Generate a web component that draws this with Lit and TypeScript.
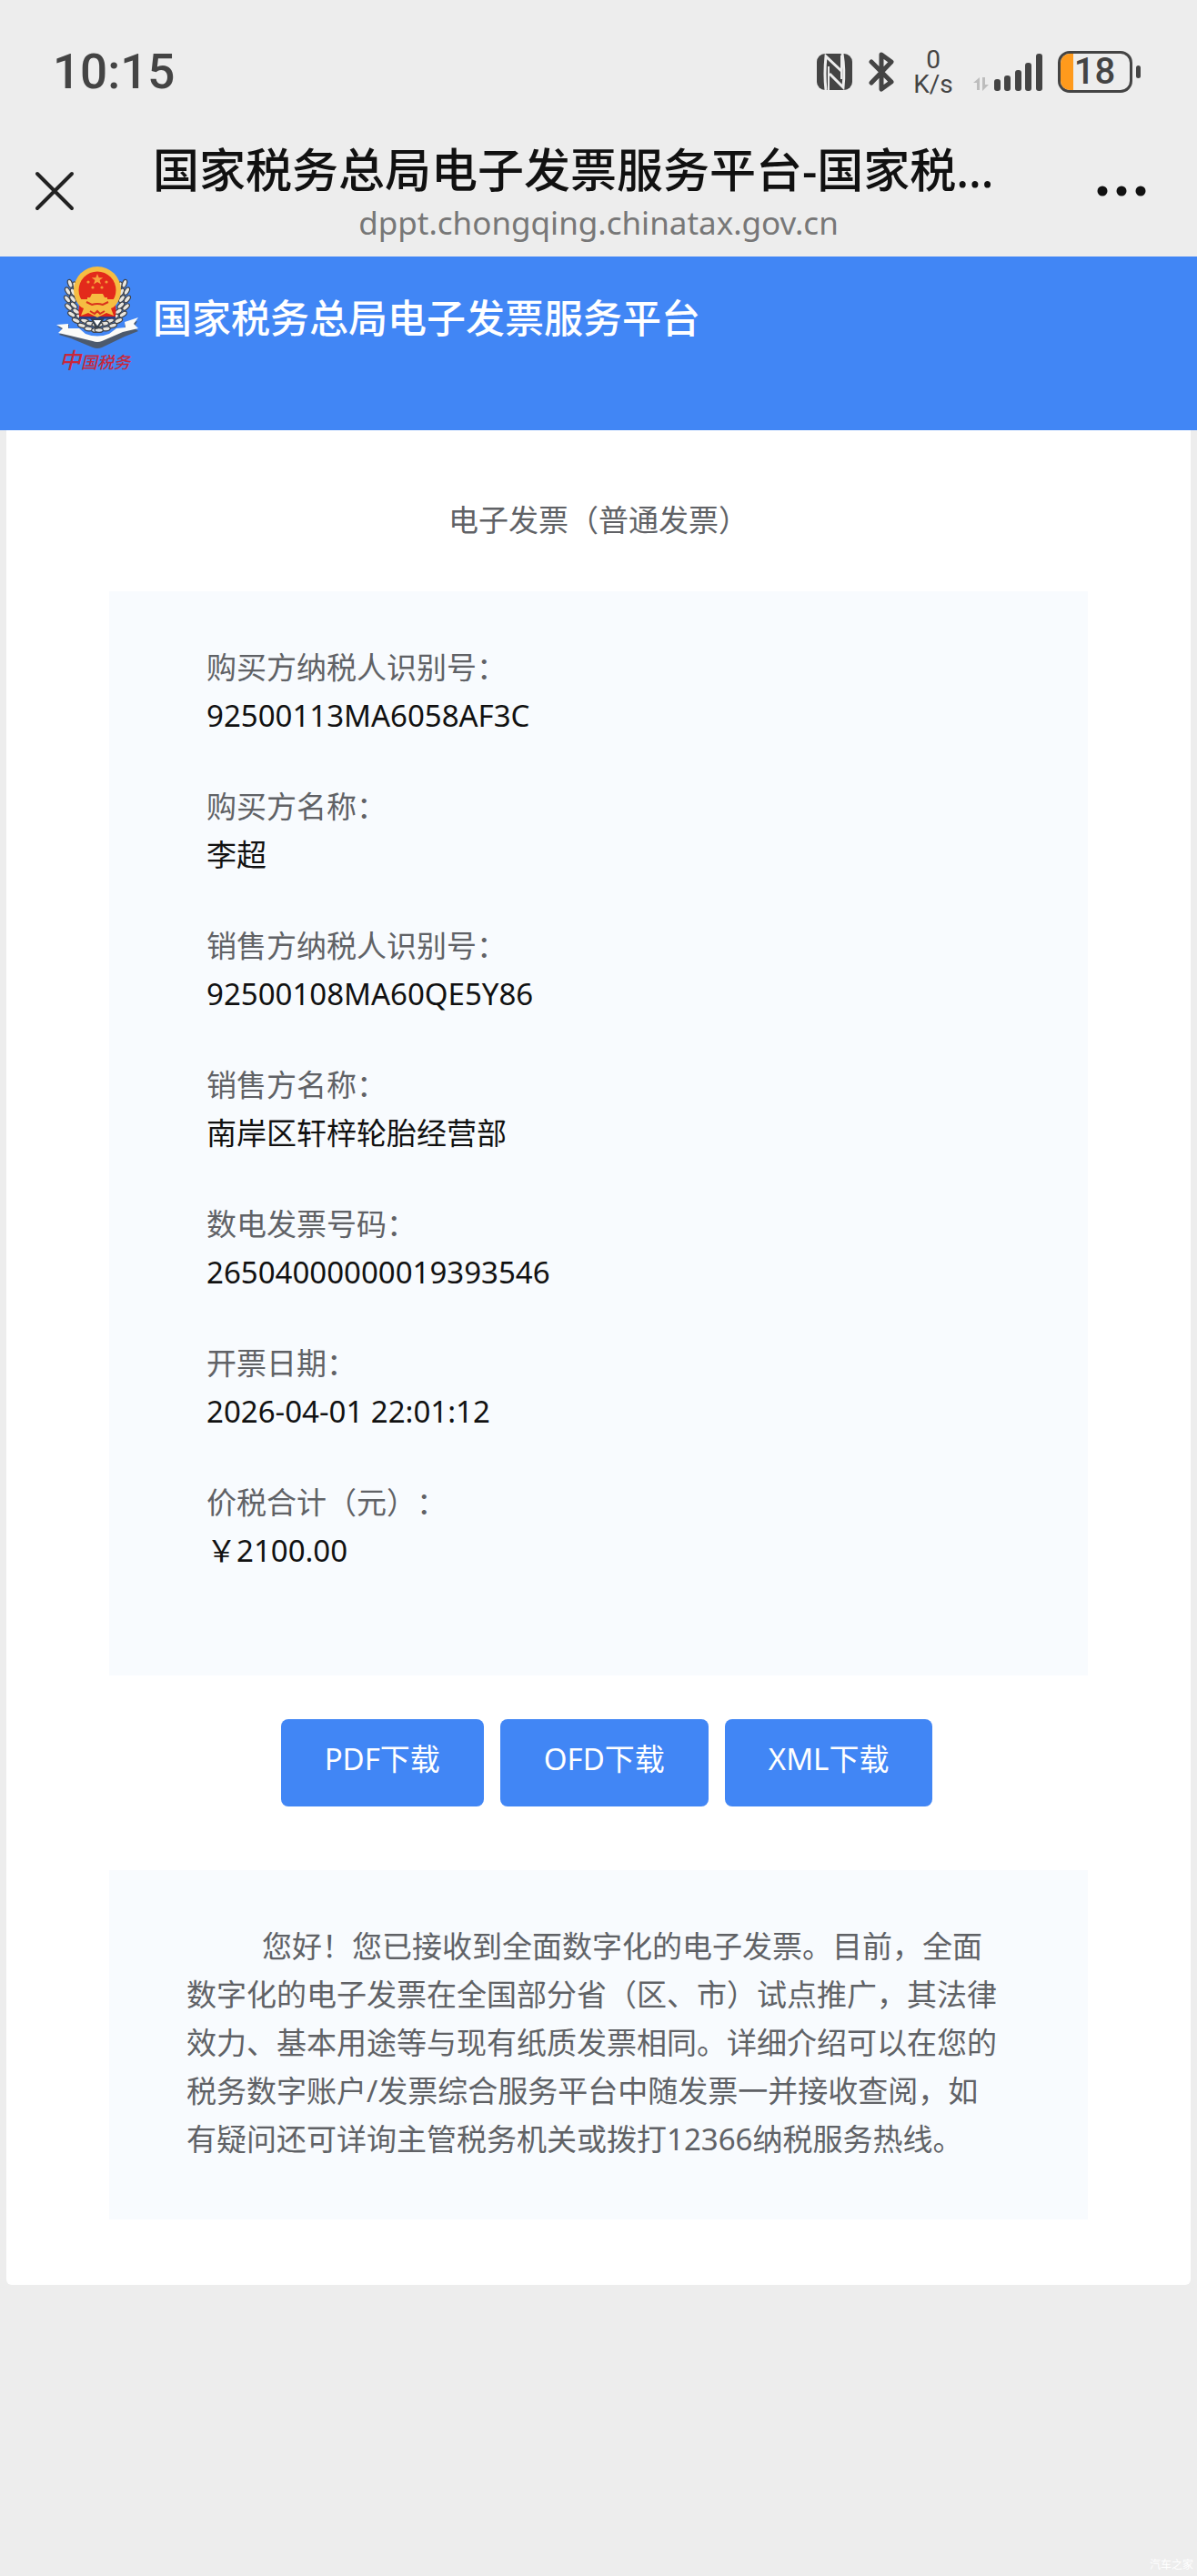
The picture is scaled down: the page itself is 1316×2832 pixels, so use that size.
import { html, svg, css, LitElement } from 'lit';
import { customElement, property } from 'lit/decorators.js';

interface InvoiceField {
  label: string;
  value: string;
}

const FIELDS: InvoiceField[] = [
  { label: '购买方纳税人识别号：', value: '92500113MA6058AF3C' },
  { label: '购买方名称：', value: '李超' },
  { label: '销售方纳税人识别号：', value: '92500108MA60QE5Y86' },
  { label: '销售方名称：', value: '南岸区轩梓轮胎经营部' },
  { label: '数电发票号码：', value: '26504000000019393546' },
  { label: '开票日期：', value: '2026-04-01 22:01:12' },
  { label: '价税合计（元）：', value: '￥2100.00' },
];

const FORMATS = ['PDF', 'OFD', 'XML'];

@customElement('status-bar')
class StatusBar extends LitElement {
  static styles = css`
    :host {
      display: flex;
      align-items: center;
      justify-content: space-between;
      height: 158px;
      padding: 0 62px 0 58px;
      box-sizing: border-box;
      color: #444;
      font-family: Roboto, 'Noto Sans', sans-serif;
    }

    .clock {
      font-size: 53px;
      font-weight: 500;
    }

    .icons {
      display: flex;
      align-items: center;
    }

    .icons svg {
      display: block;
    }

    .bluetooth {
      margin-left: 16px;
    }

    .speed {
      display: flex;
      flex-direction: column;
      width: 44px;
      margin: 0 22px 0 20px;
      font-size: 28px;
      line-height: 27px;
      text-align: center;
    }

    .battery {
      display: flex;
      align-items: center;
      margin-left: 17px;
    }

    .cell {
      display: flex;
      align-items: center;
      width: 82px;
      height: 46px;
      box-sizing: border-box;
      border: 3px solid #444;
      border-radius: 13px;
      overflow: hidden;
      font-size: 40px;
      font-weight: 500;
      line-height: 40px;
    }

    .charge {
      height: 100%;
      margin-right: 1px;
      background: #ff9a1c;
    }

    .tip {
      width: 5px;
      height: 14px;
      margin-left: 4px;
      border-radius: 3px;
      background: #444;
    }
  `;

  @property({ type: Number }) charge = 18;

  render() {
    return html`
      <span class="clock">10:15</span>
      <div class="icons">
        <svg width="40" height="42" viewBox="0 0 40 42" role="img" aria-label="NFC">
          <rect x="0" y="1" width="39" height="40" rx="9" fill="#444" />
          <path d="M10 41q-2-18 0-37l17 16M28 1q3 18 1 37L14 23" fill="none" stroke="#ededed" stroke-width="3" />
          <path d="M13 15v26M27 3v26" stroke="#ededed" stroke-width="2" />
        </svg>
        <svg class="bluetooth" width="30" height="44" viewBox="0 0 30 44" role="img" aria-label="Bluetooth">
          <path d="M4 11l22 22-11 8V3l11 8L4 34" fill="none" stroke="#444" stroke-width="5"
            stroke-linecap="round" stroke-linejoin="round" />
        </svg>
        <div class="speed"><span>0</span><span>K/s</span></div>
        <svg width="76" height="44" viewBox="0 0 76 44" role="img" aria-label="Signal">
          <path d="M0 34l7-6v14H4v-8zM10 28h3v8h4l-7 7z" fill="#bdbdbd" />
          ${[[23, 30], [34, 26], [46, 20], [57, 12], [69, 2]].map(([x, y]) => svg`
            <rect x=${x} y=${y} width="7" height=${43 - y} rx="3" fill="#444" />
          `)}
        </svg>
        <div class="battery">
          <div class="cell"><i class="charge" style="width:${this.charge}%"></i>${this.charge}</div>
          <div class="tip"></div>
        </div>
      </div>
    `;
  }
}

@customElement('browser-bar')
class BrowserBar extends LitElement {
  static styles = css`
    :host {
      display: grid;
      grid-template-columns: 168px 1fr 168px;
      height: 124px;
    }

    .action {
      display: flex;
      align-items: center;
      height: 104px;
      padding: 0 38px;
      border: none;
      background: none;
      cursor: pointer;
    }

    .more {
      justify-content: flex-end;
      padding-right: 56px;
    }

    .titles {
      min-width: 0;
      text-align: center;
    }

    .title {
      margin: 0;
      font-size: 51px;
      font-weight: 500;
      line-height: 56px;
      text-align: left;
      color: #111;
      white-space: nowrap;
    }

    .domain {
      font-size: 35px;
      line-height: 62px;
      color: #777;
    }
  `;

  render() {
    return html`
      <button class="action" aria-label="关闭">
        <svg width="44" height="44" viewBox="0 0 44 44">
          <path d="M3 3l38 38M41 3L3 41" stroke="#222" stroke-width="4" stroke-linecap="round" />
        </svg>
      </button>
      <div class="titles">
        <p class="title">国家税务总局电子发票服务平台-国家税…</p>
        <div class="domain">dppt.chongqing.chinatax.gov.cn</div>
      </div>
      <button class="action more" aria-label="更多">
        <svg width="54" height="12" viewBox="0 0 54 12" fill="#111">
          <circle cx="6" cy="6" r="5.5" />
          <circle cx="27" cy="6" r="5.5" />
          <circle cx="48" cy="6" r="5.5" />
        </svg>
      </button>
    `;
  }
}

@customElement('tax-logo')
class TaxLogo extends LitElement {
  static styles = css`
    :host {
      display: block;
      width: 90px;
      height: 120px;
    }

    .mark {
      font-family: 'Noto Sans CJK SC', sans-serif;
      font-size: 18px;
      font-style: italic;
      font-weight: 500;
      fill: #c8283c;
    }

    .mark-first {
      font-size: 24px;
    }
  `;

  // wheat ears: leaves placed along an arc on each side of the emblem
  leaves() {
    const out = [];
    for (let i = 0; i < 9; i++) {
      const a = ((205 - i * 14) * Math.PI) / 180;
      for (const side of [-1, 1]) {
        for (const r of [27, 33]) {
          const x = 45 + side * Math.abs(Math.cos(a)) * r;
          const y = 36 + Math.sin(a) * (r + 3);
          const tilt = side * (20 + i * 9);
          out.push(svg`
            <ellipse cx=${x} cy=${y} rx="2.4" ry="4.6" transform="rotate(${tilt} ${x} ${y})"
              fill="#e9e6df" stroke="#3f4248" stroke-width="1.2" />
          `);
        }
      }
    }
    return out;
  }

  render() {
    return html`
      <svg width="90" height="120" viewBox="0 0 90 120" role="img" aria-label="中国税务">
        ${this.leaves()}
        <path d="M39 60l6 9 6-9z" fill="#fff" stroke="#34404f" stroke-width="2" />
        <path d="M25 58h40" stroke="#2a3a80" stroke-width="3" />
        <circle cx="45" cy="28" r="26" fill="#f6bd42" />
        <path d="M25 42q-1 8 0 15h40q1-7 0-15z" fill="#df2418" />
        <circle cx="45" cy="28" r="20.500" fill="#e32a1b" />
        <path d="M45 10l1.700 4.300h4.600l-3.700 2.800 1.400 4.500-4-2.700-4 2.700 1.400-4.500-3.700-2.800h4.600z" fill="#f8a23c" />
        <g fill="#f39a38">
          <circle cx="35" cy="19" r="1.600" />
          <circle cx="55" cy="19" r="1.600" />
          <circle cx="40" cy="25" r="1.600" />
          <circle cx="50" cy="25" r="1.600" />
        </g>
        <path d="M39 32h12l2 4h3v2h12q-2 8-8 10l3 8-8-3-10 5-10-5-8 3 3-8q-6-2-8-10h12v-2h3z" fill="#f6bd42" />
        <path d="M33 41l6 3q6-2 12 0l6-3M37 51l5 3 3-3 3 3 5-3" fill="none" stroke="#d9321d" stroke-width="2" />
        <g transform="translate(0 -9)">
          <path d="M1 77l13-2-1 6 10-1 8 7q14 7 28 0l8-7 9 1-1-6 14-4-4 7 5 4-15 6-25 12q-5 2-10 0L16 90 3 86l5-5z"
            fill="#4c5a6e" />
          <path d="M0 75l13-1 0 5 12 0 7 6q13 5 26 0l8-6 10-1-1-6 15-5-5 7 5 5-17 4-23 10q-5 2-10 0L15 87 2 84l5-5z"
            fill="#fbfbf8" />
        </g>
        <text class="mark" x="3" y="114"><tspan class="mark-first">中</tspan>国税务</text>
      </svg>
    `;
  }
}

@customElement('app-root')
class AppRoot extends LitElement {
  static styles = css`
    :host {
      display: flex;
      flex-direction: column;
      min-height: 100vh;
      background: #ededed;
      font-family: 'Noto Sans', 'Noto Sans CJK SC', sans-serif;
      font-size: 33px;
      line-height: 53px;
      color: #606266;
      text-spacing-trim: space-all;
    }

    .banner {
      display: flex;
      align-items: flex-start;
      gap: 16px;
      height: 191px;
      padding: 9px 62px 0;
      box-sizing: border-box;
      background: #4186f5;
    }

    .banner-title {
      margin: 0;
      font-size: 43px;
      font-weight: 500;
      line-height: 118px;
      color: #fff;
    }

    .card {
      margin: 0 7px;
      padding: 72px 113px;
      border-radius: 0 0 6px 6px;
      background: #fff;
    }

    .card-title {
      margin: 0 0 52px;
      font-size: 33px;
      font-weight: 400;
      text-align: center;
    }

    .details {
      display: grid;
      gap: 47px;
      margin: 0;
      padding: 57px 108px 111px 107px;
      background: #f8fbfe;
    }

    .details dd {
      margin: 0;
      color: #111;
    }

    .downloads {
      display: flex;
      justify-content: center;
      padding: 48px 0 70px;
    }

    .download {
      height: 96px;
      margin-left: 18px;
      padding: 0 48px 10px;
      border: none;
      border-radius: 8px;
      background: #4186f5;
      color: #fff;
      font: inherit;
      cursor: pointer;
    }

    .notice {
      margin: 0;
      padding: 57px 91px 62px 85px;
      background: #f8fbfe;
      text-indent: 83px;
    }

    .watermark {
      margin-top: auto;
      padding-right: 4px;
      font-size: 12px;
      line-height: 24px;
      text-align: right;
      color: #fff;
    }
  `;

  render() {
    return html`
      <status-bar></status-bar>
      <browser-bar></browser-bar>
      <header class="banner">
        <tax-logo></tax-logo>
        <h1 class="banner-title">国家税务总局电子发票服务平台</h1>
      </header>
      <main class="card" lang="zh-CN">
        <h2 class="card-title">电子发票（普通发票）</h2>
        <dl class="details">
          ${FIELDS.map(f => html`
            <div>
              <dt>${f.label}</dt>
              <dd>${f.value}</dd>
            </div>
          `)}
        </dl>
        <div class="downloads">
          ${FORMATS.map(f => html`<button class="download">${f}下载</button>`)}
        </div>
        <p class="notice">您好！您已接收到全面数字化的电子发票。目前，全面数字化的电子发票在全国部分省（区、市）试点推广，其法律效力、基本用途等与现有纸质发票相同。详细介绍可以在您的税务数字账户/发票综合服务平台中随发票一并接收查阅，如有疑问还可详询主管税务机关或拨打12366纳税服务热线。</p>
      </main>
      <footer class="watermark">汽车之家</footer>
    `;
  }
}
